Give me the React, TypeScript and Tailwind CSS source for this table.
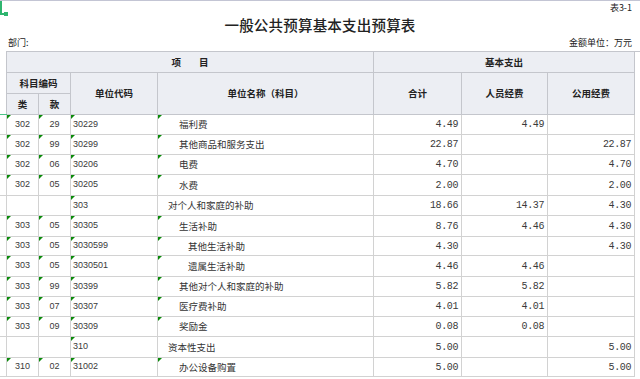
import React from "react";

type Row = {
  lei: string;
  kuan: string;
  code: string;
  name: string;
  level: number;
  total: string;
  person: string;
  pub: string;
  h: string;
};

const rows: Row[] = [
  { lei: "302", kuan: "29", code: "30229", name: "福利费", level: 2, total: "4.49", person: "4.49", pub: "", h: "h-[20px]" },
  { lei: "302", kuan: "99", code: "30299", name: "其他商品和服务支出", level: 2, total: "22.87", person: "", pub: "22.87", h: "h-[20px]" },
  { lei: "302", kuan: "06", code: "30206", name: "电费", level: 2, total: "4.70", person: "", pub: "4.70", h: "h-[20px]" },
  { lei: "302", kuan: "05", code: "30205", name: "水费", level: 2, total: "2.00", person: "", pub: "2.00", h: "h-[21px]" },
  { lei: "", kuan: "", code: "303", name: "对个人和家庭的补助", level: 1, total: "18.66", person: "14.37", pub: "4.30", h: "h-[20px]" },
  { lei: "303", kuan: "05", code: "30305", name: "生活补助", level: 2, total: "8.76", person: "4.46", pub: "4.30", h: "h-[21px]" },
  { lei: "303", kuan: "05", code: "3030599", name: "其他生活补助", level: 3, total: "4.30", person: "", pub: "4.30", h: "h-[19px]" },
  { lei: "303", kuan: "05", code: "3030501", name: "遗属生活补助", level: 3, total: "4.46", person: "4.46", pub: "", h: "h-[21px]" },
  { lei: "303", kuan: "99", code: "30399", name: "其他对个人和家庭的补助", level: 2, total: "5.82", person: "5.82", pub: "", h: "h-[20px]" },
  { lei: "303", kuan: "07", code: "30307", name: "医疗费补助", level: 2, total: "4.01", person: "4.01", pub: "", h: "h-[20px]" },
  { lei: "303", kuan: "09", code: "30309", name: "奖励金", level: 2, total: "0.08", person: "0.08", pub: "", h: "h-[20px]" },
  { lei: "", kuan: "", code: "310", name: "资本性支出", level: 1, total: "5.00", person: "", pub: "5.00", h: "h-[21px]" },
  { lei: "310", kuan: "02", code: "31002", name: "办公设备购置", level: 2, total: "5.00", person: "", pub: "5.00", h: "h-[19px]" },
];

const cjk = "font-['Noto_Sans_CJK_SC',sans-serif]";
const hd = "flex items-center justify-center border-r border-b border-[#c4c6cc] bg-[#eceef3] font-bold";
const num = "justify-end pr-[3px] font-['Liberation_Mono',monospace] text-[10px] tracking-[-0.4px] text-[#3a3a3a]";
const code = "font-['Liberation_Sans',sans-serif] text-[9px] text-[#3a3a3a]";

function Mark() {
  return (
    <span className="absolute left-0 top-0 h-0 w-0 border-t-[4px] border-r-[4px] border-t-[#0a8a0a] border-r-transparent" />
  );
}

function Cell({
  w,
  mark,
  className,
  children,
}: {
  w: string;
  mark?: boolean;
  className?: string;
  children?: React.ReactNode;
}) {
  return (
    <div className={`relative flex h-full shrink-0 items-center border-r border-[#d2d2d2] ${w} ${className ?? ""}`}>
      {mark && <Mark />}
      {children}
    </div>
  );
}

const indent: Record<number, string> = { 1: "pl-[10px]", 2: "pl-[21px]", 3: "pl-[30px]" };

export default function App() {
  return (
    <div className={`relative h-[379px] w-[640px] overflow-hidden border-t border-[#c3c5d4] bg-white text-[#222] ${cjk}`}>
      {/* selected cell outline */}
      <div className="absolute left-0 top-0 h-[14px] w-[2px] bg-[#2fb56f]" />
      <div className="absolute left-0 top-[12px] h-[2px] w-[6px] bg-[#2fb56f]" />
      <div className="absolute left-[4px] top-[11px] h-[4px] w-[4px] bg-[#2fb56f]" />

      <div className="flex h-[13px] justify-end pr-[8px] text-[9px] leading-[13px]">表3-1</div>
      <div className="mt-[1px] h-[20px] text-center text-[14.5px] font-medium leading-[20px] tracking-[0.2px]">
        一般公共预算基本支出预算表
      </div>
      <div className="flex h-[16px] items-center justify-between px-[8px] text-[9px]">
        <span>部门:</span>
        <span>金额单位：万元</span>
      </div>

      {/* header */}
      <div className="pl-[6px] text-[9.5px]">
        <div className="grid grid-cols-[32px_32px_87px_216px_88px_86px_87px] grid-rows-[21px_21px_21px] border-l border-t border-[#c4c6cc]">
          <div className={`${hd} col-span-4 tracking-[18px] pl-[18px]`}>项目</div>
          <div className={`${hd} col-span-3`}>基本支出</div>
          <div className={`${hd} col-span-2`}>科目编码</div>
          <div className={`${hd} row-span-2`}>单位代码</div>
          <div className={`${hd} row-span-2`}>单位名称（科目）</div>
          <div className={`${hd} row-span-2`}>合计</div>
          <div className={`${hd} row-span-2`}>人员经费</div>
          <div className={`${hd} row-span-2`}>公用经费</div>
          <div className={hd}>类</div>
          <div className={hd}>款</div>
        </div>
      </div>

      {/* body */}
      <div className="-mt-px w-[635px] border-t border-[#4cc488]">
        {rows.map((r, i) => {
          const full = r.lei !== "";
          return (
            <div key={i} className={`flex ${r.h} border-b border-[#d2d2d2] text-[#333]`}>
              <Cell w="w-[7px]" />
              <Cell w="w-[32px]" mark={full} className={`justify-center ${code}`}>
                {r.lei}
              </Cell>
              <Cell w="w-[32px]" mark={full} className={`justify-center ${code}`}>
                {r.kuan}
              </Cell>
              <Cell w="w-[87px]" mark className={`pl-[2px] ${code}`}>
                {r.code}
              </Cell>
              <Cell w="w-[216px]" mark={full} className={`${indent[r.level]} text-[9.5px]`}>
                {r.name}
              </Cell>
              <Cell w="w-[88px]" className={num}>
                {r.total}
              </Cell>
              <Cell w="w-[86px]" className={num}>
                {r.person}
              </Cell>
              <Cell w="w-[87px]" className={num}>
                {r.pub}
              </Cell>
            </div>
          );
        })}
      </div>
    </div>
  );
}
